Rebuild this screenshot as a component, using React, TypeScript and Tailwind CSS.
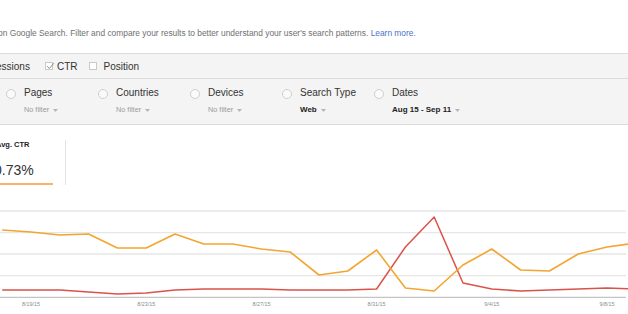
import React from 'react';

// ── Chart data ──────────────────────────────────────────────────────────────
// One point per day; x = first day + step * index. Values are y in svg px.
const DAY0_X = 2.2;
const DAY_STEP = 28.8;
const CTR_Y = [30, 32, 35, 34, 48, 48, 34, 44, 44, 49, 52, 75, 71, 50, 88, 91, 65, 49, 70, 71, 54, 47, 43];
const POS_Y = [90, 90, 90, 92, 94, 93, 90, 89, 89, 89, 90, 90, 90, 89, 47, 17, 83, 89, 91, 90, 89, 88, 89];
const GRID_Y = [11, 32.7, 54, 75.7];
const AXIS_Y = 97.3;
const DATE_LABELS = [
  { d: 1, label: '8/19/15' },
  { d: 5, label: '8/23/15' },
  { d: 9, label: '8/27/15' },
  { d: 13, label: '8/31/15' },
  { d: 17, label: '9/4/15' },
  { d: 21, label: '9/8/15' },
];

const toPts = (ys: number[]) => ys.map((y, i) => `${(DAY0_X + DAY_STEP * i).toFixed(1)},${y}`).join(' ');

const FILTERS = [
  { label: 'Pages', value: 'No filter', bold: false },
  { label: 'Countries', value: 'No filter', bold: false },
  { label: 'Devices', value: 'No filter', bold: false },
  { label: 'Search Type', value: 'Web', bold: true },
  { label: 'Dates', value: 'Aug 15 - Sep 11', bold: true },
];

function Caret() {
  return (
    <svg width="5" height="3" viewBox="0 0 5 3" className="ml-[4px] shrink-0">
      <path d="M0 0 L5 0 L2.5 3 Z" fill="#b5b5b5" />
    </svg>
  );
}

function Checkbox({ checked }: { checked?: boolean }) {
  return (
    <span className="relative w-[8px] h-[8px] border border-[#c9c9c9] bg-white shrink-0">
      {checked && (
        <svg width="9" height="8" viewBox="0 0 9 8" className="absolute left-[0px] top-[-1px]">
          <path d="M1.2 4.3 L3.4 6.4 L7.8 1.2" fill="none" stroke="#8a8a8a" strokeWidth="1" />
        </svg>
      )}
    </span>
  );
}

export default function App() {
  return (
    <div className="w-[628px] h-[314px] overflow-hidden bg-white font-['Liberation_Sans',Arial,sans-serif]">
      {/* ── Description ─────────────────────────────────────────────── */}
      <div className="h-[53px] pt-[28px] whitespace-nowrap">
        <p className="ml-[-2px] text-[8.4px] leading-[10px] text-[#6f6f6f]">
          on Google Search. Filter and compare your results to better understand your user&apos;s search patterns.{' '}
          <span className="text-[#4a74c9]">Learn more.</span>
        </p>
      </div>

      {/* ── Metric checkboxes ───────────────────────────────────────── */}
      <div className="h-[26px] border-y border-[#dcdcdc] bg-[#f4f4f4] flex items-center whitespace-nowrap text-[10px] text-[#333]">
        <span className="ml-[-24px]">Impressions</span>
        <span className="ml-[15px] flex items-center"><Checkbox checked /></span>
        <span className="ml-[4px]">CTR</span>
        <span className="ml-[12px] flex items-center"><Checkbox /></span>
        <span className="ml-[6px]">Position</span>
      </div>

      {/* ── Filters ─────────────────────────────────────────────────── */}
      <div className="h-[46px] border-b border-[#dcdcdc] bg-[#f4f4f4] flex pl-[6px] pt-[8px]">
        {FILTERS.map(f => (
          <div key={f.label} className="w-[92px] flex items-start gap-[8px] shrink-0">
            <span className="mt-[2px] w-[10px] h-[10px] rounded-full border border-[#cfcfcf] bg-[#fafafa] shrink-0" />
            <div className="whitespace-nowrap">
              <div className="text-[10px] leading-[12px] text-[#333]">{f.label}</div>
              <div
                className={`mt-[6px] flex items-center leading-[10px] ${
                  f.bold ? 'text-[8px] font-bold text-[#222]' : 'text-[7.3px] text-[#9a9a9a]'
                }`}
              >
                {f.value}
                <Caret />
              </div>
            </div>
          </div>
        ))}
      </div>

      {/* ── Scorecard ───────────────────────────────────────────────── */}
      <div className="mt-[15px] flex">
        <div className="w-[66px] h-[45px] border-r border-[#e3e3e3] flex flex-col">
          <div className="ml-[-4px] text-[7.5px] leading-[9px] font-bold text-[#222] whitespace-nowrap">Avg. CTR</div>
          <div className="ml-[-6px] mt-[13px] text-[14px] leading-[16px] text-[#333] whitespace-nowrap">0.73%</div>
          <div className="mt-[5px] w-[53px] h-[2px] bg-[#f7b46a]" />
        </div>
      </div>

      {/* ── Chart ───────────────────────────────────────────────────── */}
      <svg width="628" height="114" viewBox="0 0 628 114" className="block mt-[15px]">
        {GRID_Y.map(y => (
          <line key={y} x1="0" y1={y} x2="626" y2={y} stroke="#e6e6e6" strokeWidth="1.3" />
        ))}
        <line x1="0" y1={AXIS_Y} x2="626" y2={AXIS_Y} stroke="#c4c4c4" strokeWidth="1.3" />
        {DATE_LABELS.map(({ d, label }) => (
          <text
            key={label}
            x={DAY0_X + DAY_STEP * d}
            y="106"
            textAnchor="middle"
            fontSize="5.4"
            fill="#8c8c8c"
            fontFamily="Liberation Sans, Arial, sans-serif"
          >
            {label}
          </text>
        ))}
        <polyline points={toPts(POS_Y)} fill="none" stroke="#d9534a" strokeWidth="1.5" strokeLinejoin="round" />
        <polyline points={toPts(CTR_Y)} fill="none" stroke="#f3a531" strokeWidth="1.6" strokeLinejoin="round" />
      </svg>
    </div>
  );
}
